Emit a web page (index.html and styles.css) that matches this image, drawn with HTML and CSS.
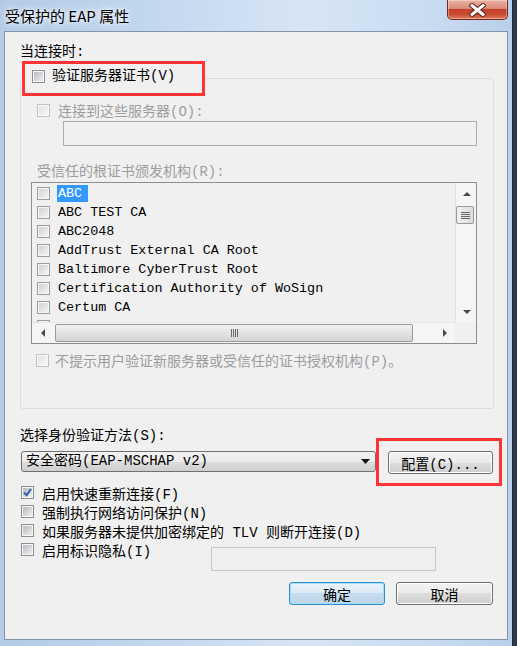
FILE: index.html
```html
<!DOCTYPE html>
<html lang="zh-CN">
<head>
    <meta charset="UTF-8">
    <meta name="viewport" content="width=device-width, initial-scale=1.0">
    <title>受保护的 EAP 属性</title>
    <link rel="stylesheet" href="styles.css">
</head>
<body>

    <div class="window">
        <div class="titlebar">
            <span class="title">受保护的 EAP 属性</span>
            <div class="close">
                <svg width="17" height="14" viewBox="0 0 17 14">
                    <path d="M3 2.5 L14 11.5 M14 2.5 L3 11.5" stroke="#5a2219" stroke-width="5" stroke-linecap="square"/>
                    <path d="M3 2.5 L14 11.5 M14 2.5 L3 11.5" stroke="#fff" stroke-width="3" stroke-linecap="square"/>
                </svg>
            </div>
        </div>

        <div class="client">
            <div class="caption">当连接时:</div>

            <fieldset class="group">
                <legend class="mark">
                    <span class="check"><span class="cb"></span>验证服务器证书(V)</span>
                </legend>

                <div class="group-body">
                    <div class="check disabled servers-row"><span class="cb off"></span>连接到这些服务器(O):</div>
                    <div class="textbox servers"></div>

                    <div class="disabled trusted">受信任的根证书颁发机构(R):</div>

                    <div class="listbox">
                        <div class="items">
                            <div class="item"><span class="cb list"></span><span class="sel">ABC</span></div>
                            <div class="item"><span class="cb list"></span>ABC TEST CA</div>
                            <div class="item"><span class="cb list"></span>ABC2048</div>
                            <div class="item"><span class="cb list"></span>AddTrust External CA Root</div>
                            <div class="item"><span class="cb list"></span>Baltimore CyberTrust Root</div>
                            <div class="item"><span class="cb list"></span>Certification Authority of WoSign</div>
                            <div class="item"><span class="cb list"></span>Certum CA</div>
                            <div class="item"><span class="cb list"></span></div>
                        </div>
                        <div class="vscroll">
                            <div class="sbtn"><span class="tri up"></span></div>
                            <div class="vthumb"><i></i><i></i><i></i><i></i></div>
                            <div class="sbtn bottom"><span class="tri down"></span></div>
                        </div>
                        <div class="hscroll">
                            <div class="sbtn"><span class="tri left"></span></div>
                            <div class="hthumb"><i></i><i></i><i></i><i></i></div>
                            <div class="sbtn right-btn"><span class="tri right"></span></div>
                        </div>
                        <div class="corner"></div>
                    </div>

                    <div class="check disabled noprompt"><span class="cb off"></span>不提示用户验证新服务器或受信任的证书授权机构(P)。</div>
                </div>
            </fieldset>

            <div class="method-label">选择身份验证方法(S):</div>
            <div class="method-row">
                <div class="combo">
                    <span>安全密码(EAP-MSCHAP v2)</span>
                    <svg width="9" height="5" viewBox="0 0 9 5"><polygon points="0,0 9,0 4.5,5" fill="#111"/></svg>
                </div>
                <button class="btn config">配置(C)...</button>
            </div>

            <div class="options">
                <div class="check opt">
                    <span class="cb on">
                        <svg width="9" height="9" viewBox="0 0 9 9"><path d="M1 4.5 L3.6 7.2 L8 1" fill="none" stroke="#2f5fa8" stroke-width="2"/></svg>
                    </span>启用快速重新连接(F)
                </div>
                <div class="check opt"><span class="cb"></span>强制执行网络访问保护(N)</div>
                <div class="check opt"><span class="cb"></span>如果服务器未提供加密绑定的 TLV 则断开连接(D)</div>
                <div class="opt-last">
                    <div class="check opt privacy"><span class="cb"></span>启用标识隐私(I)</div>
                    <div class="textbox identity"></div>
                </div>
            </div>

            <div class="buttons">
                <button class="btn ok">确定</button>
                <button class="btn cancel">取消</button>
            </div>
        </div>
    </div>

</body>
</html>
```

FILE: styles.css
```css
* { box-sizing: border-box; }
body { margin: 0; background: #2e3a48; font-family: "Liberation Mono", "Noto Sans CJK SC", monospace; font-size: 14px; color: #000; }

.window { width: 513px; height: 646px; border-right: 1px solid #1e2733; background: linear-gradient(90deg, #b3cbe7 0%, #c3d7ee 30%, #d7e6f5 60%, #c8dbf0 85%, #b9d0ea 100%); overflow: hidden; }
.titlebar { height: 31px; display: flex; justify-content: space-between; padding-left: 5px; }
.title { font-family: "Noto Sans CJK SC", sans-serif; font-size: 15px; line-height: 31px; color: #000; text-shadow: 0 0 8px #fff, 0 0 4px #fff; }
.close { width: 61px; height: 20px; margin-right: 4px; display: flex; align-items: center; justify-content: center; border: 1px solid #6e2a20; border-top: none; border-radius: 0 0 5px 5px; background: linear-gradient(#eab2a4 0%, #d98a76 45%, #c3412b 50%, #c84a32 75%, #e27a5c 100%); box-shadow: inset 0 0 0 1px rgba(255,255,255,0.35); }

.client { margin-left: 4px; width: 504px; height: 609px; border: 1px solid #8494a8; background: #f0f0f0; padding: 11px 14px 0 15px; }
.caption { line-height: 18px; height: 18px; }

.check { display: flex; align-items: center; gap: 7px; }
.cb { flex: none; width: 13px; height: 13px; border: 1px solid #8e8f8f; padding: 1px; background: linear-gradient(135deg, #b6babf, #f0f0f1) content-box, #f6f6f6; }
.cb.off { border-color: #c2c2c2; background: linear-gradient(135deg, #e2e2e2, #f6f6f6) content-box, #f8f8f8; }
.cb.list { border-color: #9c9c9c; background: linear-gradient(135deg, #cfd1d3, #f4f4f4) content-box, #f6f6f6; }
.cb.on svg { display: block; }
.disabled { color: #9d9d9d; }

.group { margin: 0; padding: 0 0 38px 0; width: 474px; border: 1px solid #d5dfe5; border-radius: 3px; }
.mark { margin-left: 1px; padding: 2px 27px 7px 7px; border: 3px solid #f33; line-height: 20px; }
.group-body { padding-left: 16px; }
.servers-row { margin-top: 4px; height: 20px; gap: 8px; }
.textbox { border: 1px solid #adadad; background: #f0f0f0; }
.servers { margin: 1px 0 0 26px; width: 414px; height: 25px; }
.trusted { margin-top: 16px; line-height: 20px; height: 20px; }

.listbox { margin-left: -6px; width: 446px; height: 162px; border: 1px solid #8a8e94; display: grid; grid-template-columns: 1fr 21px; grid-template-rows: 1fr 21px; }
.items { overflow: hidden; padding-top: 1px; font-size: 13.4px; }
.item { display: flex; align-items: center; gap: 8px; height: 19px; padding-left: 5px; white-space: nowrap; }
.sel { background: #3399ff; color: #fff; margin-left: -1px; padding: 0 6px 0 1px; line-height: 17px; }

.vscroll { display: flex; flex-direction: column; background: #f5f5f5; border-left: 1px solid #e4e4e4; }
.sbtn { width: 21px; height: 21px; display: flex; align-items: center; justify-content: center; flex: none; }
.sbtn.bottom { margin-top: auto; }
.vthumb { margin: 2px 0 0 0; width: 18px; height: 18px; border: 1px solid #9a9a9a; border-radius: 2px; background: linear-gradient(90deg, #f2f2f2, #dcdcdc); display: flex; flex-direction: column; align-items: center; justify-content: center; gap: 1px; }
.vthumb i { display: block; width: 9px; height: 1px; background: #6a6a6a; }
.hscroll { display: flex; align-items: center; background: #f5f5f5; border-top: 1px solid #e4e4e4; }
.hthumb { margin-left: 2px; width: 358px; height: 18px; border: 1px solid #9a9a9a; border-radius: 2px; background: linear-gradient(#f2f2f2, #d4d4d4); display: flex; align-items: center; justify-content: center; gap: 1px; }
.hthumb i { display: block; width: 1px; height: 8px; background: #6a6a6a; }
.right-btn { margin-left: auto; }
.corner { background: #f0f0f0; }
.tri { width: 0; height: 0; border: 4px solid transparent; }
.tri.up { border-bottom-color: #4a4a4a; border-top-width: 0; }
.tri.down { border-top-color: #4a4a4a; border-bottom-width: 0; }
.tri.left { border-right-color: #4a4a4a; border-left-width: 0; }
.tri.right { border-left-color: #4a4a4a; border-right-width: 0; }

.noprompt { margin: 6px 0 0 -1px; height: 20px; gap: 6px; }

.method-label { margin-top: 17px; line-height: 20px; height: 20px; }
.method-row { display: flex; align-items: flex-start; gap: 12px; margin: 5px 0 0 1px; }
.combo { width: 355px; height: 21px; border: 1px solid #707070; border-radius: 3px; background: linear-gradient(#f2f2f2 0%, #ebebeb 50%, #dddddd 50%, #cfcfcf 100%); display: flex; align-items: center; justify-content: space-between; padding: 0 5px 0 4px; line-height: 19px; }
.btn { font: inherit; color: #000; height: 23px; padding: 0; border: 1px solid #707070; border-radius: 3px; background: linear-gradient(#f2f2f2 0%, #ebebeb 50%, #dddddd 50%, #cfcfcf 100%); box-shadow: inset 0 0 0 1px #fcfcfc; }
.config { position: relative; width: 105px; }
.config::after { content: ""; position: absolute; left: -13px; top: -14px; right: -10px; bottom: -13px; border: 3px solid #f33; pointer-events: none; }

.options { margin: 9px 0 0 1px; }
.opt { height: 19px; gap: 8px; }
.opt-last { display: flex; align-items: flex-start; }
.privacy { width: 190px; }
.identity { margin-top: 7px; width: 225px; height: 24px; border-color: #c6c6c6; }

.buttons { display: flex; justify-content: flex-end; gap: 11px; margin-top: 11px; }
.ok { width: 96px; border-color: #2e8ed4; background: linear-gradient(#eaf4fb 0%, #dbeaf5 50%, #c7dcec 50%, #bcd5e8 100%); box-shadow: inset 0 0 0 1px #a8dcf7; }
.cancel { width: 97px; }
```
